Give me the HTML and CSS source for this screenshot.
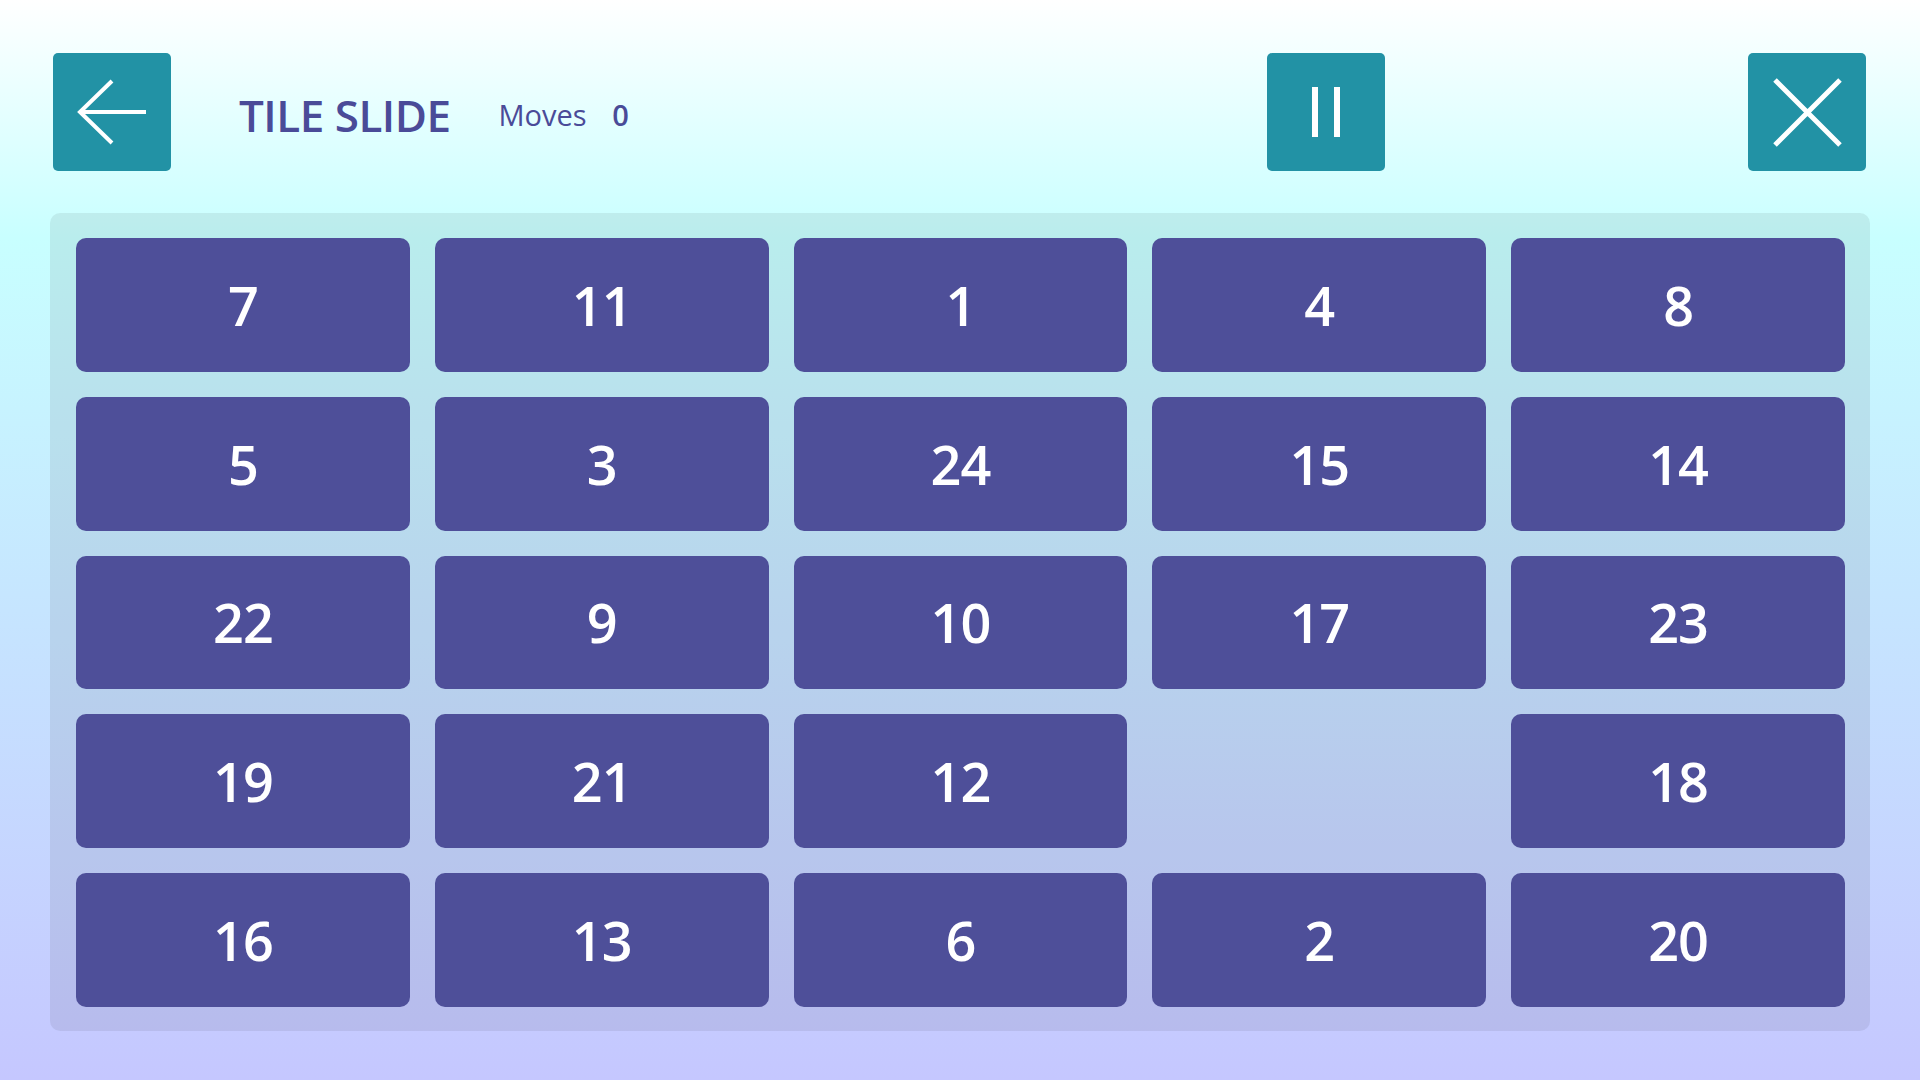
FILE: index.html
```html
<!DOCTYPE html>
<html lang="en">
<head>
    <meta charset="UTF-8">
    <meta name="viewport" content="width=device-width, initial-scale=1.0">
    <title>Tile Slide</title>
    <link rel="stylesheet" href="styles.css">
</head>
<body>
    <header class="top-bar">
        <button class="icon-button" id="back" type="button" aria-label="Back">
            <svg width="118" height="118" viewBox="0 0 118 118">
                <path d="M59 28 L27 59 L59 90 M27 59 H93" fill="none" stroke="#FFFFFF" stroke-width="4"/>
            </svg>
        </button>
        <h1 class="title">TILE SLIDE</h1>
        <p class="moves">Moves <span class="moves-count">0</span></p>

        <div class="controls">
            <button class="icon-button" id="pause" type="button" aria-label="Pause">
                <svg width="118" height="118" viewBox="0 0 118 118">
                    <rect x="45" y="34" width="6" height="50" fill="#FFFFFF"/>
                    <rect x="67" y="34" width="6" height="50" fill="#FFFFFF"/>
                </svg>
            </button>
            <button class="icon-button" id="close" type="button" aria-label="Close">
                <svg width="118" height="118" viewBox="0 0 118 118">
                    <path d="M27 27 L92 92 M92 27 L27 92" fill="none" stroke="#FFFFFF" stroke-width="5"/>
                </svg>
            </button>
        </div>
    </header>

    <section class="board">
        <div class="tile">7</div>
        <div class="tile">11</div>
        <div class="tile">1</div>
        <div class="tile">4</div>
        <div class="tile">8</div>

        <div class="tile">5</div>
        <div class="tile">3</div>
        <div class="tile">24</div>
        <div class="tile">15</div>
        <div class="tile">14</div>

        <div class="tile">22</div>
        <div class="tile">9</div>
        <div class="tile">10</div>
        <div class="tile">17</div>
        <div class="tile">23</div>

        <div class="tile">19</div>
        <div class="tile">21</div>
        <div class="tile">12</div>
        <div class="tile empty"></div>
        <div class="tile">18</div>

        <div class="tile">16</div>
        <div class="tile">13</div>
        <div class="tile">6</div>
        <div class="tile">2</div>
        <div class="tile">20</div>
    </section>
</body>
</html>
```

FILE: styles.css
```css
html, body {
    height: 100%;
}
body {
    background: linear-gradient(to bottom, #FFFFFF 0%, #C8FFFF 22%, #C6E6FF 55%, #C5C7FF 100%);
    box-sizing: border-box;
    color: #4A4B98;
    font-family: 'Open Sans', 'Noto Sans', sans-serif;
    margin: 0;
    overflow: hidden;
    padding: 0;
}

.top-bar {
    align-items: center;
    display: flex;
    height: 118px;
    padding: 53px 54px 0 53px;
}

.icon-button {
    background-color: #2292A5;
    border: none;
    border-radius: 5px;
    cursor: pointer;
    display: block;
    height: 118px;
    padding: 0;
    width: 118px;
}
.icon-button svg {
    display: block;
}
.icon-button:hover {
    background-color: #27A2B6;
}

.title {
    font-size: 44px;
    font-weight: 600;
    letter-spacing: -0.5px;
    margin: 6px 0 0 68px;
}

.moves {
    font-size: 29px;
    margin: 4px 0 0 48px;
}
.moves-count {
    font-weight: 600;
    margin-left: 18px;
}

.controls {
    display: flex;
    gap: 363px;
    margin-left: auto;
}

.board {
    background-color: rgba(0, 0, 0, 0.07);
    border-radius: 10px;
    box-sizing: border-box;
    display: grid;
    gap: 25px;
    grid-template-columns: repeat(5, 1fr);
    grid-template-rows: repeat(5, 1fr);
    height: 818px;
    margin: 42px 50px 0 50px;
    padding: 25px 25px 24px 26px;
}

.tile {
    align-items: center;
    background-color: #4E4F99;
    border-radius: 10px;
    color: #FFFFFF;
    display: flex;
    font-size: 54px;
    font-weight: 600;
    justify-content: center;
    letter-spacing: -1px;
}
.tile.empty {
    background-color: transparent;
}
```
